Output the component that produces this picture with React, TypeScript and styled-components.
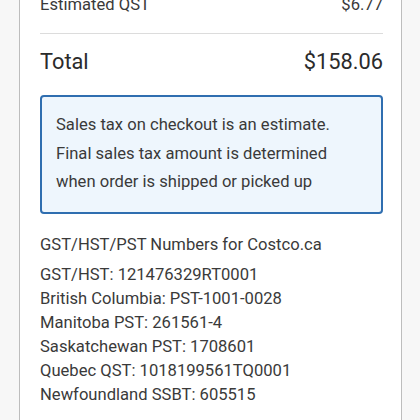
import styled, { createGlobalStyle } from "styled-components";

const GlobalStyle = createGlobalStyle`
	html, body {
		margin: 0;
		padding: 0;
		background: #f7f7f7;
		font-family: Roboto, "Liberation Sans", sans-serif;
		color: #333;
	}
`;

const Page = styled.div`
	width: 420px;
	height: 420px;
	overflow: hidden;
	padding: 0 18px 0 19px;
	box-sizing: border-box;
`;

const Card = styled.div`
	background: #fff;
	border-left: 1px solid #bdbdbd;
	border-right: 1px solid #bdbdbd;
	padding: 0 18px 0 20px;
	margin-top: -14px;
	height: 460px;
`;

const Row = styled.div<{ $big?: boolean }>`
	display: flex;
	justify-content: space-between;
	align-items: center;
	font-size: ${(p) => (p.$big ? "21.8px" : "16.6px")};
	line-height: ${(p) => (p.$big ? "26px" : "20px")};
	color: ${(p) => (p.$big ? "#2b2b2b" : "#3a3a3a")};
	padding: ${(p) => (p.$big ? "15px 0 20px" : "9px 0 18px")};
`;

const Divider = styled.hr`
	border: none;
	border-top: 1px solid #dcdcdc;
	margin: 0;
`;

const Notice = styled.div`
	background: #eef6fd;
	border: 2px solid #2f6eb0;
	border-radius: 4px;
	padding: 14px 14px 15px 14px;
	font-size: 16.6px;
	line-height: 28.5px;
	color: #3a3a3a;
`;

const Heading = styled.div`
	margin-top: 21px;
	font-size: 16.6px;
	line-height: 20px;
	color: #3a3a3a;
`;

const List = styled.ul`
	list-style: none;
	margin: 8px 0 0;
	padding: 0;
	font-size: 16.6px;
	line-height: 24px;
	color: #3a3a3a;
`;

const numbers = [
	"GST/HST: 121476329RT0001",
	"British Columbia: PST-1001-0028",
	"Manitoba PST: 261561-4",
	"Saskatchewan PST: 1708601",
	"Quebec QST: 1018199561TQ0001",
	"Newfoundland SSBT: 605515",
];

export default function App() {
	return (
		<>
			<GlobalStyle />
			<Page>
				<Card>
					<Row>
						<span>Estimated QST</span>
						<span>$6.77</span>
					</Row>
					<Divider />
					<Row $big>
						<span>Total</span>
						<span>$158.06</span>
					</Row>
					<Notice>
						Sales tax on checkout is an estimate.
						<br />
						Final sales tax amount is determined
						<br />
						when order is shipped or picked up
					</Notice>
					<Heading>GST/HST/PST Numbers for Costco.ca</Heading>
					<List>
						{numbers.map((n) => (
							<li key={n}>{n}</li>
						))}
					</List>
				</Card>
			</Page>
		</>
	);
}
